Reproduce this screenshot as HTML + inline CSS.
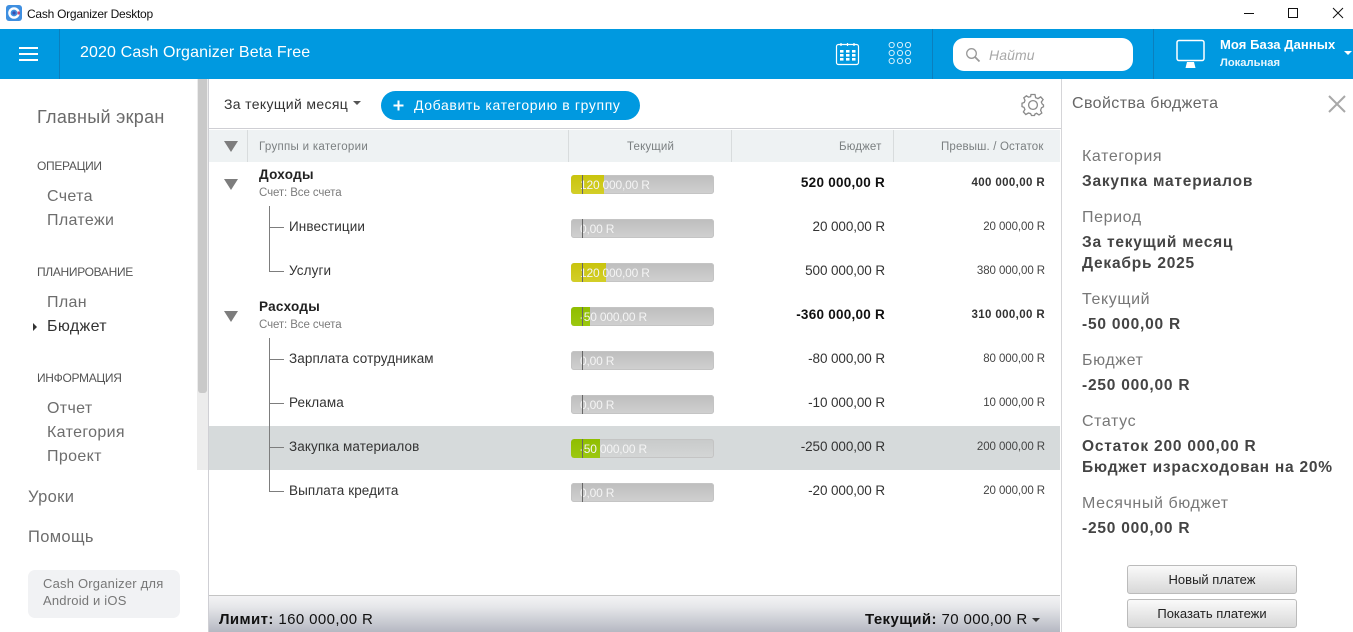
<!DOCTYPE html>
<html><head><meta charset="utf-8">
<style>
html,body{margin:0;padding:0;background:#fff;}
#r{position:relative;width:1353px;height:632px;overflow:hidden;background:#fff;font-family:"Liberation Sans","DejaVu Sans",sans-serif;}
#r div,#r span.t{position:absolute;white-space:nowrap;}
.n{font-size:16px;color:#6d6d6d;letter-spacing:.35px;line-height:20px;}
.h{font-size:12px;color:#555;letter-spacing:-.32px;line-height:16px;}
.c{font-size:13.5px;color:#333;letter-spacing:.1px;line-height:18px;left:289px;}
.g{font-size:13.5px;color:#222;font-weight:bold;left:259px;line-height:18px;letter-spacing:.3px;}
.s{font-size:11.5px;color:#7c7c7c;left:259px;line-height:14px;letter-spacing:-.1px;}
.th{font-size:11.5px;color:#7a7f80;line-height:16px;top:139px;letter-spacing:.15px;}
.bar{left:571px;width:143px;height:19px;border-radius:3px;background:linear-gradient(#bdbdbd,#d0d0d0);box-shadow:inset 0 0 0 1px #c4c4c4;overflow:hidden;}
.fy{left:0;top:0;height:19px;background:linear-gradient(#c9c40d,#d3ce28);border-radius:3px 0 0 3px;}
.fg{left:0;top:0;height:19px;background:linear-gradient(#8fbd00,#9cc810);border-radius:3px 0 0 3px;}
.tk{left:11px;top:-2px;width:1px;height:21px;background:#666;}
.bt{left:9px;top:1px;font-size:12px;line-height:18px;color:#f4f4f4;letter-spacing:-.2px;}
.b1{text-align:right;right:468px;font-size:13.5px;color:#333;line-height:18px;letter-spacing:-.1px;}
.b2{text-align:right;right:308px;font-size:11.5px;color:#444;line-height:16px;letter-spacing:-.08px;}
.bb{font-weight:bold;color:#111;letter-spacing:.25px;}
.b2.bb{letter-spacing:.37px;color:#333;}
.tl{background:#7d7d7d;}
.pl{left:1082px;font-size:16px;color:#777;line-height:20px;letter-spacing:.6px;}
.pv{left:1082px;font-size:15.5px;color:#444;font-weight:bold;line-height:20px;letter-spacing:.78px;}
.btn{left:1127px;width:168px;height:27px;border:1px solid #bbb;border-radius:3px;background:linear-gradient(#fafafa,#d8d8d8);text-align:center;font-size:13px;line-height:27px;color:#222;}
</style></head><body><div id="r">

<!-- title bar -->
<svg style="position:absolute;left:6px;top:5px" width="16" height="16" viewBox="0 0 16 16"><rect width="16" height="16" rx="3" fill="#3f8fe0"/><circle cx="8" cy="8" r="4.6" fill="none" stroke="#fff" stroke-width="2.4"/><circle cx="8" cy="8" r="1.6" fill="#3a4fb0"/><rect x="11.5" y="6.5" width="2.5" height="3" fill="#c04a7a"/></svg>
<div style="left:27px;top:6px;font-size:12px;line-height:16px;color:#111;letter-spacing:-.25px">Cash Organizer Desktop</div>
<svg style="position:absolute;left:1240px;top:4px" width="110" height="18" viewBox="0 0 110 18"><path d="M4 9.5H14" stroke="#111" fill="none"/><rect x="48.5" y="4.5" width="9" height="9" stroke="#111" fill="none"/><path d="M93 4L103 14M103 4L93 14" stroke="#111" fill="none"/></svg>

<!-- blue top bar -->
<div style="left:0;top:29px;width:1353px;height:50px;background:#0099e0"></div>
<div style="left:19px;top:47px;width:19px;height:2px;background:#fff"></div>
<div style="left:19px;top:53px;width:19px;height:2px;background:#fff"></div>
<div style="left:19px;top:59px;width:19px;height:2px;background:#fff"></div>
<div style="left:59px;top:29px;width:1px;height:50px;background:#0b7fbd"></div>
<div style="left:80px;top:42px;font-size:16px;line-height:22px;color:#fff;letter-spacing:.12px">2020 Cash Organizer Beta Free</div>
<svg style="position:absolute;left:835px;top:42px" width="26" height="24" viewBox="0 0 26 24"><rect x="1.5" y="2.5" width="22" height="20" rx="2" fill="none" stroke="#fff" stroke-width="1.2"/><path d="M6 1V4M12.5 1V4M19 1V4" stroke="#fff" stroke-width="1.2"/><g fill="#fff"><rect x="5" y="8" width="3.5" height="2.6"/><rect x="11" y="8" width="3.5" height="2.6"/><rect x="17" y="8" width="3.5" height="2.6"/><rect x="5" y="12" width="3.5" height="2.6"/><rect x="11" y="12" width="3.5" height="2.6"/><rect x="17" y="12" width="3.5" height="2.6"/><rect x="5" y="16" width="3.5" height="2.6"/><rect x="11" y="16" width="3.5" height="2.6"/><rect x="17" y="16" width="3.5" height="2.6"/></g></svg>
<svg style="position:absolute;left:888px;top:42px" width="26" height="24" viewBox="0 0 26 24" fill="none" stroke="#d3eefb" stroke-width="1"><circle cx="3.7" cy="3" r="2.6"/><circle cx="12" cy="3" r="2.6"/><circle cx="20" cy="3" r="2.6"/><circle cx="3.7" cy="11" r="2.6"/><circle cx="12" cy="11" r="2.6"/><circle cx="20" cy="11" r="2.6"/><circle cx="3.7" cy="19" r="2.6"/><circle cx="12" cy="19" r="2.6"/><circle cx="20" cy="19" r="2.6"/></svg>
<div style="left:932px;top:29px;width:1px;height:50px;background:#0b7fbd"></div>
<div style="left:953px;top:38px;width:180px;height:33px;border-radius:11px;background:#fff"></div>
<svg style="position:absolute;left:965px;top:47px" width="16" height="16" viewBox="0 0 16 16" fill="none" stroke="#999" stroke-width="1.3"><circle cx="6.5" cy="6.5" r="4.8"/><path d="M10 10L14.5 14.5" stroke-width="1.8"/></svg>
<div style="left:989px;top:46px;font-size:14px;line-height:18px;font-style:italic;color:#a8a8a8;letter-spacing:.1px">Найти</div>
<div style="left:1153px;top:29px;width:1px;height:50px;background:#0b7fbd"></div>
<svg style="position:absolute;left:1175px;top:39px" width="34" height="31" viewBox="0 0 34 31"><rect x="2" y="1.5" width="27" height="20" rx="2" fill="none" stroke="#fff" stroke-width="1.5"/><path d="M12 23H19L20.5 29H10.5Z" fill="#fff"/></svg>
<div style="left:1220px;top:36px;font-size:13px;font-weight:bold;line-height:18px;color:#fff;letter-spacing:.07px">Моя База Данных</div>
<div style="left:1220px;top:55px;font-size:11.2px;font-weight:bold;line-height:16px;color:#e8f6fd">Локальная</div>
<svg style="position:absolute;left:1344px;top:51px" width="9" height="6"><path d="M0 0H8L4 4Z" fill="#fff"/></svg>

<!-- sidebar -->
<div style="left:37px;top:105px;font-size:18px;line-height:24px;color:#6a6a6a;letter-spacing:.3px">Главный экран</div>
<div class="h" style="left:37px;top:158px">ОПЕРАЦИИ</div>
<div class="n" style="left:47px;top:187px">Счета</div>
<div class="n" style="left:47px;top:211px">Платежи</div>
<div class="h" style="left:37px;top:264px">ПЛАНИРОВАНИЕ</div>
<div class="n" style="left:47px;top:293px">План</div>
<svg style="position:absolute;left:33px;top:323px" width="5" height="8"><path d="M0 0L4 4L0 8Z" fill="#333"/></svg>
<div class="n" style="left:47px;top:317px;color:#333">Бюджет</div>
<div class="h" style="left:37px;top:370px">ИНФОРМАЦИЯ</div>
<div class="n" style="left:47px;top:399px">Отчет</div>
<div class="n" style="left:47px;top:423px">Категория</div>
<div class="n" style="left:47px;top:447px">Проект</div>
<div class="n" style="left:28px;top:487px;font-size:16.5px">Уроки</div>
<div class="n" style="left:28px;top:527px;font-size:16.5px">Помощь</div>
<div style="left:28px;top:570px;width:152px;height:48px;border-radius:7px;background:#f1f2f4"></div>
<div style="left:43px;top:575px;font-size:13px;line-height:17px;color:#777;letter-spacing:.2px;white-space:pre">Cash Organizer для
Android и iOS</div>

<!-- scrollbar -->
<div style="left:197px;top:79px;width:11px;height:391px;background:#ececec"></div>
<div style="left:198px;top:79px;width:9px;height:314px;background:#c9c9c9;border-radius:0 0 3px 3px"></div>
<div style="left:208px;top:79px;width:1px;height:553px;background:#cfcfd4"></div>

<!-- toolbar -->
<div style="left:224px;top:95px;font-size:14px;line-height:18px;color:#333;letter-spacing:.35px">За текущий месяц</div>
<svg style="position:absolute;left:353px;top:101px" width="9" height="5"><path d="M0 0H8L4 4Z" fill="#555"/></svg>
<div style="left:381px;top:91px;width:259px;height:29px;border-radius:15px;background:#0099e0"></div>
<svg style="position:absolute;left:393px;top:100px" width="11" height="11"><path d="M5.5 0.5V10.5M0.5 5.5H10.5" stroke="#fff" stroke-width="2"/></svg>
<div style="left:414px;top:96px;font-size:14px;line-height:18px;color:#fff;letter-spacing:.63px">Добавить категорию в группу</div>
<svg style="position:absolute;left:1021px;top:93px" width="24" height="24" viewBox="0 0 24 24" fill="none" stroke="#8a8a8a" stroke-width="1.3"><path d="M10 1.5H14L14.6 4.6L17 5.6L19.7 3.9L22.1 6.6L20.3 9.1L21.2 11L22.5 12L22.5 13.7L20.5 14.8L19.6 17.2L20.8 20L18 22L15.6 20.3L14 21L13.5 22.5H10.5L9.6 20.6L7.4 20L4.8 21.5L2.4 18.9L3.9 16.4L3 14.4L1 13.6V10.2L3.2 9.5L4 7.4L2.8 4.8L5.4 2.8L7.6 4.2L9.6 3.6Z"/><circle cx="12" cy="12" r="4.4"/></svg>
<div style="left:209px;top:128px;width:852px;height:1px;background:#cfcfd4"></div>

<!-- table header -->
<div style="left:209px;top:130px;width:851px;height:32px;background:#eef2f3"></div>
<svg style="position:absolute;left:224px;top:141px" width="14" height="11"><path d="M0 0H14L7 11Z" fill="#7d7d7d"/></svg>
<div style="left:247px;top:130px;width:1px;height:32px;background:#d8dcdd"></div>
<div style="left:568px;top:130px;width:1px;height:32px;background:#d8dcdd"></div>
<div style="left:731px;top:130px;width:1px;height:32px;background:#d8dcdd"></div>
<div style="left:893px;top:130px;width:1px;height:32px;background:#d8dcdd"></div>
<div class="th" style="left:259px;letter-spacing:.3px">Группы и категории</div>
<div class="th" style="left:627px">Текущий</div>
<div class="th" style="left:839px">Бюджет</div>
<div class="th" style="left:941px">Превыш. / Остаток</div>

<!-- selected row -->
<div style="left:209px;top:426px;width:851px;height:44px;background:#d6dadb"></div>

<!-- tree lines -->
<div class="tl" style="left:269px;top:206px;width:1px;height:65px"></div>
<div class="tl" style="left:269px;top:227px;width:15px;height:1px"></div>
<div class="tl" style="left:269px;top:271px;width:15px;height:1px"></div>
<div class="tl" style="left:269px;top:338px;width:1px;height:153px"></div>
<div class="tl" style="left:269px;top:359px;width:15px;height:1px"></div>
<div class="tl" style="left:269px;top:403px;width:15px;height:1px"></div>
<div class="tl" style="left:269px;top:447px;width:15px;height:1px"></div>
<div class="tl" style="left:269px;top:491px;width:15px;height:1px"></div>

<!-- rows -->
<svg style="position:absolute;left:224px;top:179px" width="14" height="11"><path d="M0 0H14L7 11Z" fill="#7d7d7d"/></svg>
<div class="g" style="top:166px">Доходы</div>
<div class="s" style="top:186px">Счет: Все счета</div>
<div class="bar" style="top:175px"><div class="fy" style="width:33px"></div><div class="bt">120 000,00 R</div><div class="tk"></div></div>
<div class="b1 bb" style="top:174px">520 000,00 R</div>
<div class="b2 bb" style="top:175px">400 000,00 R</div>

<div class="c" style="top:218px">Инвестиции</div>
<div class="bar" style="top:219px"><div class="bt">0,00 R</div><div class="tk"></div></div>
<div class="b1" style="top:218px">20 000,00 R</div>
<div class="b2" style="top:219px">20 000,00 R</div>

<div class="c" style="top:262px">Услуги</div>
<div class="bar" style="top:263px"><div class="fy" style="width:35px"></div><div class="bt">120 000,00 R</div><div class="tk"></div></div>
<div class="b1" style="top:262px">500 000,00 R</div>
<div class="b2" style="top:263px">380 000,00 R</div>

<svg style="position:absolute;left:224px;top:311px" width="14" height="11"><path d="M0 0H14L7 11Z" fill="#7d7d7d"/></svg>
<div class="g" style="top:298px">Расходы</div>
<div class="s" style="top:318px">Счет: Все счета</div>
<div class="bar" style="top:307px"><div class="fg" style="width:19px"></div><div class="bt">-50 000,00 R</div><div class="tk"></div></div>
<div class="b1 bb" style="top:306px">-360 000,00 R</div>
<div class="b2 bb" style="top:307px">310 000,00 R</div>

<div class="c" style="top:350px">Зарплата сотрудникам</div>
<div class="bar" style="top:351px"><div class="bt">0,00 R</div><div class="tk"></div></div>
<div class="b1" style="top:350px">-80 000,00 R</div>
<div class="b2" style="top:351px">80 000,00 R</div>

<div class="c" style="top:394px">Реклама</div>
<div class="bar" style="top:395px"><div class="bt">0,00 R</div><div class="tk"></div></div>
<div class="b1" style="top:394px">-10 000,00 R</div>
<div class="b2" style="top:395px">10 000,00 R</div>

<div class="c" style="top:438px">Закупка материалов</div>
<div class="bar" style="top:439px;background:linear-gradient(#c8caca,#d4d6d6)"><div class="fg" style="width:29px"></div><div class="bt">-50 000,00 R</div><div class="tk"></div></div>
<div class="b1" style="top:438px">-250 000,00 R</div>
<div class="b2" style="top:439px">200 000,00 R</div>

<div class="c" style="top:482px">Выплата кредита</div>
<div class="bar" style="top:483px"><div class="bt">0,00 R</div><div class="tk"></div></div>
<div class="b1" style="top:482px">-20 000,00 R</div>
<div class="b2" style="top:483px">20 000,00 R</div>

<!-- footer -->
<div style="left:209px;top:595px;width:851px;height:1px;background:#c4c4c4"></div>
<div style="left:209px;top:596px;width:851px;height:36px;background:linear-gradient(#f3f3f5,#e6e7ea 30%,#b5b8c2)"></div>
<div style="left:219px;top:611px;font-size:15px;line-height:18px;color:#111;letter-spacing:.4px"><b>Лимит:</b> 160 000,00 R</div>
<div style="left:865px;top:611px;font-size:15px;line-height:18px;color:#111;letter-spacing:.4px"><b>Текущий:</b> 70 000,00 R</div>
<svg style="position:absolute;left:1032px;top:618px" width="9" height="5"><path d="M0 0H8L4 4Z" fill="#333"/></svg>

<!-- right panel -->
<div style="left:1061px;top:79px;width:1px;height:553px;background:#d5d5d8"></div>
<div style="left:1072px;top:94px;font-size:16px;line-height:20px;color:#666;letter-spacing:.4px">Свойства бюджета</div>
<svg style="position:absolute;left:1328px;top:95px" width="18" height="18"><path d="M1 1L17 17M17 1L1 17" stroke="#a8a8a8" stroke-width="2" fill="none"/></svg>
<div class="pl" style="top:147px">Категория</div>
<div class="pv" style="top:172px">Закупка материалов</div>
<div class="pl" style="top:208px">Период</div>
<div class="pv" style="top:233px">За текущий месяц</div>
<div class="pv" style="top:254px">Декабрь 2025</div>
<div class="pl" style="top:290px">Текущий</div>
<div class="pv" style="top:315px">-50 000,00 R</div>
<div class="pl" style="top:351px">Бюджет</div>
<div class="pv" style="top:376px">-250 000,00 R</div>
<div class="pl" style="top:412px">Статус</div>
<div class="pv" style="top:437px">Остаток 200 000,00 R</div>
<div class="pv" style="top:458px">Бюджет израсходован на 20%</div>
<div class="pl" style="top:494px">Месячный бюджет</div>
<div class="pv" style="top:519px">-250 000,00 R</div>
<div class="btn" style="top:565px">Новый платеж</div>
<div class="btn" style="top:599px">Показать платежи</div>

</div></body></html>
